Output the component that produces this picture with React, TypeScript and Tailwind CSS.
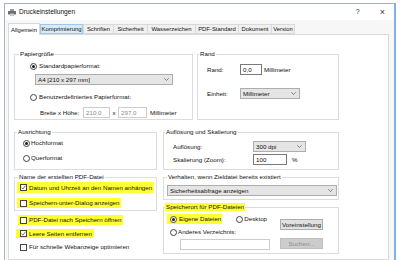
import type { ReactNode } from "react";

const tabs = [
  { label: "Allgemein", w: "w-[32px]", state: "active" },
  { label: "Komprimierung", w: "w-[43px]", state: "hover" },
  { label: "Schriften", w: "w-[30px]", state: "" },
  { label: "Sicherheit", w: "w-[34px]", state: "" },
  { label: "Wasserzeichen", w: "w-[48px]", state: "" },
  { label: "PDF-Standard", w: "w-[43px]", state: "" },
  { label: "Dokument", w: "w-[33px]", state: "" },
  { label: "Version", w: "w-[24px]", state: "last" },
];

function Radio({ checked }: { checked?: boolean }) {
  return (
    <span className="w-[7px] h-[7px] rounded-full border border-[#444] bg-white flex items-center justify-center shrink-0">
      {checked && <span className="w-[3px] h-[3px] rounded-full bg-[#1a1a1a]" />}
    </span>
  );
}

function Check({ checked }: { checked?: boolean }) {
  return (
    <span className="w-[7px] h-[7px] border border-[#444] bg-white flex items-center justify-center shrink-0">
      {checked && (
        <svg width="5" height="5" viewBox="0 0 5 5">
          <path d="M0.4 2.6l1.4 1.5L4.6 0.7" stroke="#333" strokeWidth="0.7" fill="none" />
        </svg>
      )}
    </span>
  );
}

function Chevron() {
  return (
    <svg width="5" height="3" viewBox="0 0 5 3" className="shrink-0">
      <path d="M0.3 0.3L2.5 2.5L4.7 0.3" stroke="#555" strokeWidth="0.7" fill="none" />
    </svg>
  );
}

function Select({ text, w }: { text: string; w: string }) {
  return (
    <div className={`${w} h-[11px] flex items-center justify-between bg-[#e5e5e5] border border-[#adadad] pl-[2px] pr-[3px] shrink-0`}>
      <span>{text}</span>
      <Chevron />
    </div>
  );
}

function Group({
  title,
  cls,
  legendCls,
  children,
}: {
  title: string;
  cls: string;
  legendCls: string;
  children: ReactNode;
}) {
  return (
    <fieldset className={`border border-[#dcdcdc] flex flex-col shrink-0 ${cls}`}>
      <legend className={`px-[1px] leading-[8px] ${legendCls}`}>{title}</legend>
      {children}
    </fieldset>
  );
}

export default function App() {
  return (
    <div className="w-[400px] h-[260px] overflow-hidden bg-white pl-[4px] pt-[3px] font-['Liberation_Sans',Arial,sans-serif] text-[6.2px] leading-[8px] text-[#111] whitespace-nowrap">
      <div className="w-[392px] h-[257px] flex flex-col bg-[#f0f0f0] border-l border-t border-[#a9b4c2] border-r-2 border-r-[#7db3ea]">
        {/* title bar */}
        <div className="h-[16px] bg-white flex items-center pl-[3px] pr-[9px] shrink-0">
          <svg width="8" height="7" viewBox="0 0 8 7" className="shrink-0">
            <rect x="2" y="0" width="4" height="2" fill="#9a9a9a" />
            <rect x="0" y="2" width="8" height="3.5" rx="0.5" fill="#6d6d6d" />
            <rect x="2" y="4.5" width="4" height="2.5" fill="#c8c8c8" />
          </svg>
          <span className="ml-[3px] text-[6.6px]">Druckeinstellungen</span>
          <span className="ml-auto text-[7px] text-[#333]">?</span>
          <span className="ml-[20px] text-[9px] font-light text-[#333]">×</span>
        </div>

        {/* body */}
        <div className="flex-1 flex flex-col pl-[3px] pt-[3px] bg-[#f7f7f7] min-h-0">
          <div className="flex items-end h-[11px] shrink-0 text-[5.9px]">
            {tabs.map((t) => (
              <div
                key={t.label}
                className={
                  t.state === "active"
                    ? `${t.w} h-[12px] -mb-px relative z-10 bg-white border border-b-0 border-[#d9d9d9] flex items-center justify-center`
                    : t.state === "hover"
                    ? `${t.w} h-[10px] bg-[#d8eaf9] border border-[#9fc8ef] flex items-center justify-center`
                    : t.state === "last"
                    ? `${t.w} h-[10px] bg-[#f0f0f0] border border-[#d9d9d9] flex items-center justify-center`
                    : `${t.w} h-[10px] bg-[#f0f0f0] border border-r-0 border-[#d9d9d9] flex items-center justify-center`
                }
              >
                {t.label}
              </div>
            ))}
          </div>

          {/* panel */}
          <div className="w-[381px] flex-1 bg-white border border-[#d9d9d9] pl-[5px] pt-[15px] flex flex-col">
            {/* row 1 */}
            <div className="flex gap-[4px]">
              <Group title="Papiergröße" cls="w-[179px] h-[70px]" legendCls="ml-[4px]">
                <div className="mt-[4px] ml-[15px] flex items-center gap-[2px] h-[8px]">
                  <Radio checked />
                  <span>Standardpapierformat:</span>
                </div>
                <div className="mt-[4px] ml-[20px]">
                  <Select text="A4 [210 x 297 mm]" w="w-[138px]" />
                </div>
                <div className="mt-[8px] ml-[15px] flex items-center gap-[2px] h-[8px]">
                  <Radio />
                  <span>Benutzerdefiniertes Papierformat:</span>
                </div>
                <div className="mt-[6px] ml-[25px] flex items-center h-[11px]">
                  <span className="w-[43px]">Breite x Höhe:</span>
                  <div className="w-[27px] h-[11px] border border-[#cccccc] text-[#8a8a8a] flex items-center pl-[2px]">210,0</div>
                  <span className="w-[8px] text-center">x</span>
                  <div className="w-[29px] h-[11px] border border-[#cccccc] text-[#8a8a8a] flex items-center pl-[2px]">297,0</div>
                  <span className="ml-[3px]">Millimeter</span>
                </div>
              </Group>

              <Group title="Rand" cls="w-[142px] h-[70px]" legendCls="ml-[1px]">
                <div className="mt-[6px] ml-[9px] flex items-center h-[11px]">
                  <span className="w-[33px]">Rand:</span>
                  <div className="w-[22px] h-[11px] border border-[#7a7a7a] flex items-center pl-[2px]">0,0</div>
                  <span className="ml-[2px]">Millimeter</span>
                </div>
                <div className="mt-[13px] ml-[9px] flex items-center h-[11px]">
                  <span className="w-[33px]">Einheit:</span>
                  <Select text="Millimeter" w="w-[60px]" />
                </div>
              </Group>
            </div>

            {/* row 2 */}
            <div className="flex gap-[6px] mt-[8px]">
              <Group title="Ausrichtung" cls="w-[143px] h-[42px]" legendCls="ml-[2px]">
                <div className="mt-[3px] ml-[8px] flex items-center gap-[1px] h-[8px]">
                  <Radio checked />
                  <span>Hochformat</span>
                </div>
                <div className="mt-[7px] ml-[8px] flex items-center gap-[1px] h-[8px]">
                  <Radio />
                  <span>Querformat</span>
                </div>
              </Group>

              <Group title="Auflösung und Skalierung" cls="w-[176px] h-[42px]" legendCls="ml-[1px]">
                <div className="mt-[5px] ml-[9px] flex items-center h-[11px]">
                  <span className="w-[80px]">Auflösung:</span>
                  <Select text="300 dpi" w="w-[53px]" />
                </div>
                <div className="mt-[2px] ml-[9px] flex items-center h-[11px]">
                  <span className="w-[80px]">Skalierung (Zoom):</span>
                  <div className="w-[34px] h-[11px] border border-[#7a7a7a] flex items-center pl-[2px]">100</div>
                  <span className="ml-[5px]">%</span>
                </div>
              </Group>
            </div>

            {/* row 3 */}
            <div className="flex gap-[6px] mt-[3px]">
              <div className="w-[143px] flex flex-col">
                <Group title="Name der erstellten PDF-Datei" cls="w-[143px] h-[38px]" legendCls="ml-[3px]">
                  <div className="mt-[1px] ml-[2px] self-start flex items-center gap-[2px] h-[11px] bg-[#ffff33] pl-[3px] pr-[2px]">
                    <Check checked />
                    <span>Datum und Uhrzeit an den Namen anhängen</span>
                  </div>
                  <div className="mt-[5px] ml-[2px] self-start flex items-center gap-[2px] h-[10px] bg-[#ffff33] pl-[3px] pr-[2px]">
                    <Check />
                    <span>Speichern-unter-Dialog anzeigen</span>
                  </div>
                </Group>
                <div className="mt-[4px] ml-[4px] self-start flex items-center gap-[2px] h-[10px] bg-[#ffff33] pl-[2px] pr-[2px]">
                  <Check />
                  <span>PDF-Datei nach Speichern öffnen</span>
                </div>
                <div className="mt-[4px] ml-[2px] self-start flex items-center gap-[2px] h-[9px] bg-[#ffff33] pl-[4px] pr-[2px]">
                  <Check checked />
                  <span>Leere Seiten entfernen</span>
                </div>
                <div className="mt-[5px] ml-[6px] self-start flex items-center gap-[2px] h-[8px]">
                  <Check />
                  <span>Für schnelle Webanzeige optimieren</span>
                </div>
              </div>

              <div className="w-[176px] flex flex-col">
                <Group title="Verhalten, wenn Zieldatei bereits existiert" cls="w-[176px] h-[27px]" legendCls="ml-[3px]">
                  <div className="mt-[4px] ml-[3px]">
                    <Select text="Sicherheitsabfrage anzeigen" w="w-[170px]" />
                  </div>
                </Group>
                <Group title="Speicherort für PDF-Dateien" cls="w-[176px] h-[51px] mt-[3px]" legendCls="ml-[1px] bg-[#ffff33]">
                  <div className="flex">
                    <div className="w-[116px] flex flex-col">
                      <div className="mt-[3px] flex items-center h-[10px]">
                        <div className="ml-[3px] h-[10px] flex items-center gap-[2px] bg-[#ffff33] pl-[3px] pr-[1px]">
                          <Radio checked />
                          <span>Eigene Dateien</span>
                        </div>
                        <div className="ml-[14px] flex items-center gap-[1px]">
                          <Radio />
                          <span>Desktop</span>
                        </div>
                      </div>
                      <div className="mt-[4px] ml-[6px] flex items-center gap-[1px] h-[8px]">
                        <Radio />
                        <span>Anderes Verzeichnis:</span>
                      </div>
                      <div className="mt-[3px] ml-[16px] w-[90px] h-[11px] border border-[#cccccc] bg-white" />
                    </div>
                    <div className="flex flex-col">
                      <div className="mt-[8px] w-[43px] h-[11px] bg-[#e1e1e1] border border-[#adadad] flex items-center justify-center">
                        Voreinstellung
                      </div>
                      <div className="mt-[8px] w-[43px] h-[11px] bg-[#cccccc] border border-[#bfbfbf] text-[#8c8c8c] flex items-center justify-center">
                        Suchen...
                      </div>
                    </div>
                  </div>
                </Group>
              </div>
            </div>
          </div>
        </div>
      </div>
    </div>
  );
}
